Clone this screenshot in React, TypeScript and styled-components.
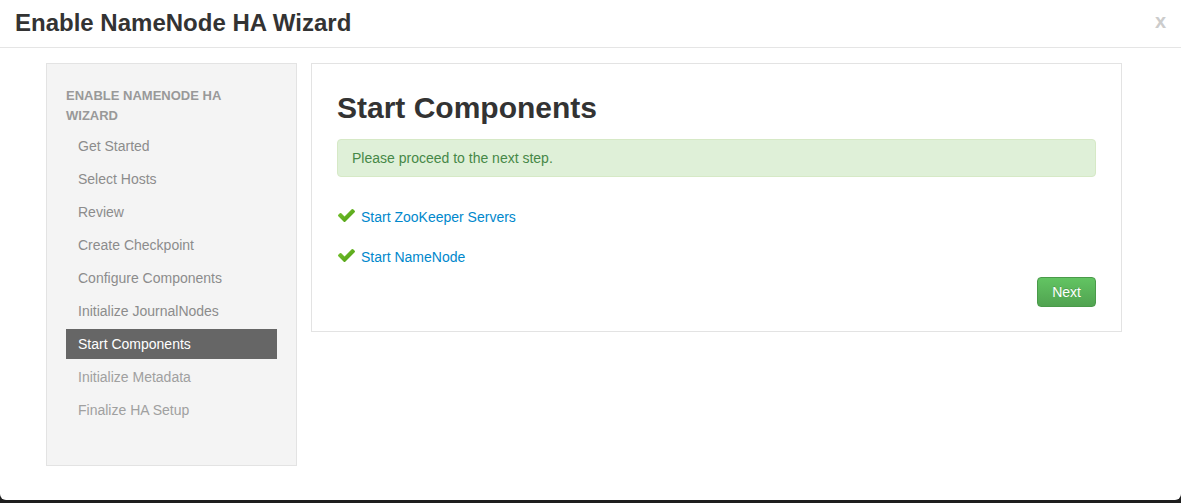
import React from "react";
import styled, { createGlobalStyle } from "styled-components";

const GlobalStyle = createGlobalStyle`
  html, body {
    margin: 0;
    padding: 0;
    background: #1e1e1e;
  }
  body {
    font-family: "Liberation Sans", Arial, Helvetica, sans-serif;
    font-size: 14px;
    color: #333;
  }
  * { box-sizing: border-box; }
`;

const Modal = styled.div`
  width: 1181px;
  height: 500px;
  background: #fff;
  border-radius: 0 0 6px 6px;
  display: flex;
  flex-direction: column;
`;

const Header = styled.div`
  height: 48px;
  border-bottom: 1px solid #e5e5e5;
  display: flex;
  align-items: center;
  justify-content: space-between;
  padding: 0 15px 2px 15px;
`;

const Title = styled.h3`
  margin: 0;
  font-size: 24px;
  line-height: 24px;
  font-weight: bold;
  color: #333;
`;

const Close = styled.span`
  font-size: 20px;
  font-weight: bold;
  line-height: 20px;
  color: #ccc;
  margin-top: -3px;
`;

const Body = styled.div`
  display: flex;
  align-items: flex-start;
  gap: 14px;
  padding: 15px 0 0 46px;
`;

const Sidebar = styled.div`
  width: 251px;
  background: #f4f4f4;
  border: 1px solid #e3e3e3;
  padding: 22px 19px 40px;
`;

const SideHeading = styled.div`
  width: 190px;
  font-size: 13px;
  line-height: 20px;
  font-weight: bold;
  text-transform: uppercase;
  color: #999;
  margin-bottom: 5px;
`;

const NavList = styled.ul`
  list-style: none;
  margin: 0;
  padding: 0;
  display: flex;
  flex-direction: column;
  gap: 3px;
`;

const NavItem = styled.li<{ $state: "done" | "active" | "todo" }>`
  height: 30px;
  line-height: 30px;
  padding: 0 12px;
  font-size: 14px;
  color: ${(p) =>
    p.$state === "active" ? "#fff" : p.$state === "done" ? "#8c8c8c" : "#a0a0a0"};
  background: ${(p) => (p.$state === "active" ? "#666" : "transparent")};
`;

const Panel = styled.div`
  width: 811px;
  border: 1px solid #e3e3e3;
  background: #fff;
  padding: 24px 25px 24px;
`;

const PanelTitle = styled.h2`
  margin: 0 0 11px;
  font-size: 30px;
  line-height: 40px;
  font-weight: bold;
  color: #333;
`;

const Alert = styled.div`
  background: #dff0d8;
  border: 1px solid #d6e9c6;
  border-radius: 4px;
  color: #468847;
  padding: 8px 35px 8px 14px;
  font-size: 14px;
  line-height: 20px;
`;

const TaskList = styled.div`
  display: flex;
  flex-direction: column;
  gap: 20px;
  margin: 30px 0 10px;
`;

const Task = styled.div`
  font-size: 14px;
  line-height: 20px;
`;

const TaskLink = styled.a`
  color: #0088cc;
  text-decoration: none;
  margin-left: 6px;
  cursor: pointer;
`;

const CheckSvg = styled.svg`
  vertical-align: baseline;
  margin-left: 1px;
`;

const ButtonRow = styled.div`
  display: flex;
  justify-content: flex-end;
`;

const SuccessButton = styled.button`
  height: 30px;
  padding: 4px 14px;
  font-family: inherit;
  font-size: 14px;
  line-height: 20px;
  color: #fff;
  text-shadow: 0 -1px 0 rgba(0, 0, 0, 0.15);
  background: linear-gradient(to bottom, #62c462, #51a351);
  border: 1px solid #4a9a4a;
  border-radius: 4px;
  cursor: pointer;
`;

const CheckIcon = () => (
  <CheckSvg width="17" height="13" viewBox="121 334 1550 1188">
    <defs>
      <linearGradient id="chk" x1="0" y1="0" x2="1" y2="1">
        <stop offset="0" stopColor="#7cc733" />
        <stop offset="1" stopColor="#48990f" />
      </linearGradient>
    </defs>
    <path
      fill="url(#chk)"
      d="M1671 566q0 40-28 68l-724 724-136 136q-28 28-68 28t-68-28l-136-136-362-362q-28-28-28-68t28-68l136-136q28-28 68-28t68 28l294 295 656-657q28-28 68-28t68 28l136 136q28 28 28 68z"
    />
  </CheckSvg>
);

const steps: { label: string; state: "done" | "active" | "todo" }[] = [
  { label: "Get Started", state: "done" },
  { label: "Select Hosts", state: "done" },
  { label: "Review", state: "done" },
  { label: "Create Checkpoint", state: "done" },
  { label: "Configure Components", state: "done" },
  { label: "Initialize JournalNodes", state: "done" },
  { label: "Start Components", state: "active" },
  { label: "Initialize Metadata", state: "todo" },
  { label: "Finalize HA Setup", state: "todo" },
];

const tasks = ["Start ZooKeeper Servers", "Start NameNode"];

export default function App() {
  return (
    <>
      <GlobalStyle />
      <Modal>
        <Header>
          <Title>Enable NameNode HA Wizard</Title>
          <Close>x</Close>
        </Header>
        <Body>
          <Sidebar>
            <SideHeading>Enable NameNode HA Wizard</SideHeading>
            <NavList>
              {steps.map((s) => (
                <NavItem key={s.label} $state={s.state}>
                  {s.label}
                </NavItem>
              ))}
            </NavList>
          </Sidebar>
          <Panel>
            <PanelTitle>Start Components</PanelTitle>
            <Alert>Please proceed to the next step.</Alert>
            <TaskList>
              {tasks.map((t) => (
                <Task key={t}>
                  <CheckIcon />
                  <TaskLink>{t}</TaskLink>
                </Task>
              ))}
            </TaskList>
            <ButtonRow>
              <SuccessButton>Next</SuccessButton>
            </ButtonRow>
          </Panel>
        </Body>
      </Modal>
    </>
  );
}
